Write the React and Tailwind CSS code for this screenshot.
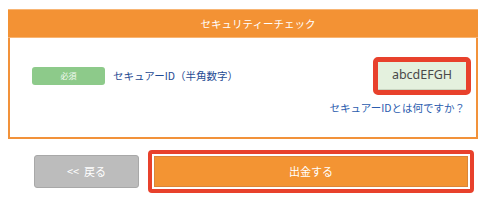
export default function App() {
  const jp = { fontFamily: '"Noto Sans CJK JP", "Noto Sans", sans-serif' };
  return (
    <div className="w-[487px] h-[204px] bg-white pt-[9px] pl-[8px]" style={jp}>
      <div className="w-[470px] border-2 border-t-0 border-[#f2923a]">
        <div className="h-[29px] -mx-[2px] bg-[#f39234] border-t border-b border-[#f8b574] flex items-center justify-center pl-[30px] text-white text-[10.5px]">
          セキュリティーチェック
        </div>
        <div className="pl-[22px] pr-[5px] pt-[19px] pb-[21px]">
          <div className="flex items-center justify-between">
            <div className="flex items-center gap-[8px]">
              <div className="w-[73px] h-[18px] rounded-[3px] bg-[#8dca8a] flex items-center justify-center text-[8px] text-white/90">
                必須
              </div>
              <span className="text-[10.5px] text-[#1f4b93]">セキュアーID（半角数字）</span>
            </div>
            <div className="w-[98px] h-[38px] border-[5px] border-[#e8412c] rounded-[5px] flex">
              <div className="flex-1 bg-[#e4f1de] border-b border-[#c9d6c2] flex items-center justify-center text-[12.5px] text-[#4a4a4a]" style={{ fontFamily: '"Noto Sans", sans-serif' }}>
                abcdEFGH
              </div>
            </div>
          </div>
          <div className="flex justify-end pr-[6px] mt-[5px]">
            <span className="text-[10.5px] text-[#2b5cae]">セキュアーIDとは何ですか？</span>
          </div>
        </div>
      </div>
      <div className="flex items-center mt-[11px] pl-[26px]">
        <div className="w-[105px] h-[33px] rounded-[3px] bg-[#bcbcbc] border border-[#a8a8a8] flex items-center justify-center gap-[5px] text-white text-[11px]">
          <span>&lt;&lt;</span>
          <span>戻る</span>
        </div>
        <div className="ml-[9px] w-[326px] h-[43px] border-[4px] border-[#e8412c] rounded-[4px] p-[2px] flex">
          <div className="flex-1 bg-[#f39433] border border-[#d9863a] flex items-center justify-center text-white text-[11px]">
            出金する
          </div>
        </div>
      </div>
    </div>
  );
}
